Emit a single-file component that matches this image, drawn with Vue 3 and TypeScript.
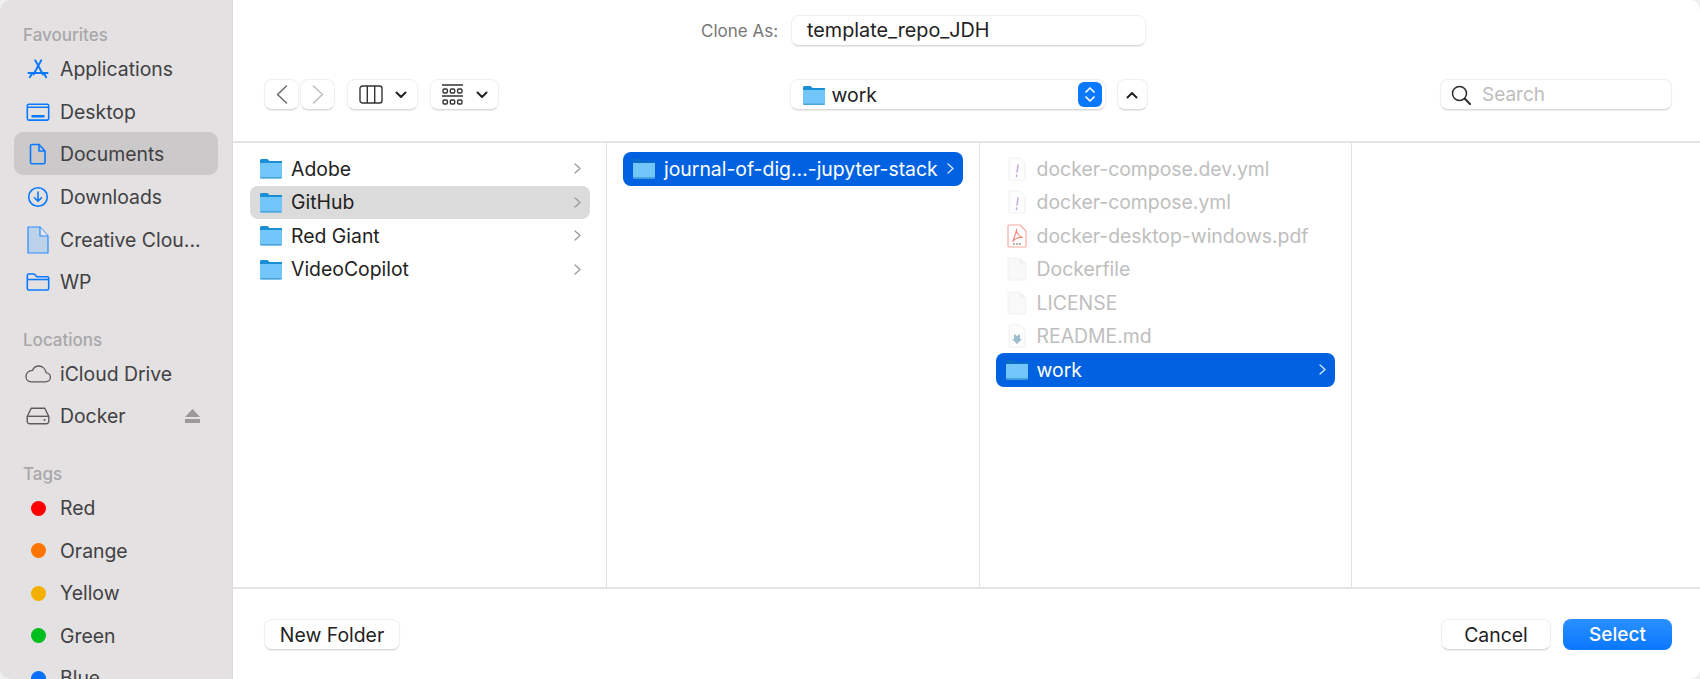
<script setup lang="ts">
interface SideItem {
  label: string
  icon: string
  active?: boolean
  eject?: boolean
}

interface FileRow {
  name: string
  icon: string
  state?: 'active' | 'selected' | 'dimmed'
  folder?: boolean
}

const favourites: SideItem[] = [
  { label: 'Applications', icon: 'apps' },
  { label: 'Desktop', icon: 'desktop' },
  { label: 'Documents', icon: 'doc', active: true },
  { label: 'Downloads', icon: 'downloads' },
  { label: 'Creative Clou...', icon: 'creative' },
  { label: 'WP', icon: 'wp' },
]

const locations: SideItem[] = [
  { label: 'iCloud Drive', icon: 'cloud' },
  { label: 'Docker', icon: 'disk', eject: true },
]

const tags = [
  { label: 'Red', color: '#fe0000' },
  { label: 'Orange', color: '#fd7400' },
  { label: 'Yellow', color: '#f3b000' },
  { label: 'Green', color: '#00bf1d' },
  { label: 'Blue', color: '#0a6ffb' },
]

const columns: FileRow[][] = [
  [
    { name: 'Adobe', icon: 'folder', folder: true },
    { name: 'GitHub', icon: 'folder', folder: true, state: 'active' },
    { name: 'Red Giant', icon: 'folder', folder: true },
    { name: 'VideoCopilot', icon: 'folder', folder: true },
  ],
  [{ name: 'journal-of-dig...-jupyter-stack', icon: 'folder', folder: true, state: 'selected' }],
  [
    { name: 'docker-compose.dev.yml', icon: 'yml', state: 'dimmed' },
    { name: 'docker-compose.yml', icon: 'yml', state: 'dimmed' },
    { name: 'docker-desktop-windows.pdf', icon: 'pdf', state: 'dimmed' },
    { name: 'Dockerfile', icon: 'blank', state: 'dimmed' },
    { name: 'LICENSE', icon: 'blank', state: 'dimmed' },
    { name: 'README.md', icon: 'readme', state: 'dimmed' },
    { name: 'work', icon: 'folder', folder: true, state: 'selected' },
  ],
  [],
]
</script>

<template>
  <div class="dialog">
    <aside class="sidebar">
      <div class="side-head first">Favourites</div>
      <div v-for="item in favourites" :key="item.label" class="side-row" :class="{ active: item.active }">
        <span class="side-icon">
          <svg v-if="item.icon === 'apps'" width="22" height="20" viewBox="0 0 24 22" fill="none" stroke="#0a78ff" stroke-width="2.2" stroke-linecap="round">
            <path d="M9 1.500l8.500 15.500M15.500 1.500L7 17M1.500 15.500h21M3 20l1.500-2.500M21 20l-1.500-2.500" />
          </svg>
          <svg v-else-if="item.icon === 'desktop'" width="24" height="20" viewBox="0 0 24 20" fill="none" stroke="#0a78ff" stroke-width="1.6">
            <rect x="1.300" y="2.300" width="21.400" height="15.800" rx="1.500" />
            <path d="M1.500 5.300h21" />
            <path d="M5.500 14.200h13" stroke-width="2.4" />
          </svg>
          <svg v-else-if="item.icon === 'doc'" width="18" height="22" viewBox="0 0 18 22" fill="none" stroke="#0a78ff" stroke-width="1.6" stroke-linejoin="round">
            <path d="M3 1.500h7l6 6.500v11.200a1.500 1.500 0 0 1-1.500 1.500H3a1.500 1.500 0 0 1-1.500-1.500V3A1.500 1.500 0 0 1 3 1.500z" />
            <path d="M10 1.500V8h6" />
          </svg>
          <svg v-else-if="item.icon === 'downloads'" width="22" height="22" viewBox="0 0 22 22" fill="none" stroke="#0a78ff" stroke-width="1.6" stroke-linecap="round" stroke-linejoin="round">
            <circle cx="11" cy="11" r="9.300" />
            <path d="M11 6v9M7.500 11.800L11 15.300l3.500-3.500" />
          </svg>
          <svg v-else-if="item.icon === 'creative'" width="22" height="28" viewBox="0 0 22 28" stroke-linejoin="round">
            <path d="M1 1h12l8 9v17H1z" fill="#bcd2ea" stroke="#2e8bfa" stroke-width="1.2" />
            <path d="M13 1v9h8" fill="#e6e6ea" stroke="#2e8bfa" stroke-width="1.2" />
          </svg>
          <svg v-else width="24" height="20" viewBox="0 0 24 20" fill="none" stroke="#0a78ff" stroke-width="1.6" stroke-linejoin="round">
            <path d="M1.300 5V3.500a1.500 1.500 0 0 1 1.500-1.500h5.500l2.500 2.700h10.400a1.500 1.500 0 0 1 1.500 1.500v10.300a1.500 1.500 0 0 1-1.500 1.500H2.800a1.500 1.500 0 0 1-1.500-1.500z" />
            <path d="M1.500 7.500h21" />
          </svg>
        </span>
        <span class="side-label">{{ item.label }}</span>
      </div>

      <div class="side-head">Locations</div>
      <div v-for="item in locations" :key="item.label" class="side-row">
        <span class="side-icon">
          <svg v-if="item.icon === 'cloud'" width="26" height="18" viewBox="0 0 26 18" fill="none" stroke="#5c5a5c" stroke-width="1.3" stroke-linejoin="round">
            <path d="M6 16.800h14.500c2.900 0 4.900-2 4.900-4.500 0-2.300-1.800-4.300-4.200-4.400C20.400 3.800 17.300 1 13.900 1c-3 0-5.400 1.800-6.400 4.400C3.700 5.400 1 8 1 11.500c0 3 2.200 5.300 5 5.300z" />
          </svg>
          <svg v-else width="24" height="18" viewBox="0 0 24 18" fill="none" stroke="#5c5a5c" stroke-width="1.4" stroke-linejoin="round">
            <path d="M5.200 1.300h13.600l4 8.200v4.800a2.500 2.500 0 0 1-2.500 2.500H3.700a2.500 2.500 0 0 1-2.500-2.500V9.500z" />
            <path d="M1.500 9.300h21" />
            <circle cx="18.500" cy="13" r="1" fill="#5c5a5c" stroke="none" />
          </svg>
        </span>
        <span class="side-label">{{ item.label }}</span>
        <svg v-if="item.eject" class="eject" width="15" height="14" viewBox="0 0 15 14" fill="#9b999b">
          <path d="M7.500 0L15 8H0z" />
          <rect x="0" y="10" width="15" height="4" />
        </svg>
      </div>

      <div class="side-head">Tags</div>
      <div v-for="tag in tags" :key="tag.label" class="side-row">
        <span class="side-icon">
          <span class="dot" :style="{ background: tag.color }"></span>
        </span>
        <span class="side-label">{{ tag.label }}</span>
      </div>
    </aside>

    <main class="main">
      <header class="top">
        <div class="clone-row">
          <label class="clone-label">Clone As:</label>
          <div class="clone-input">template_repo_JDH</div>
        </div>
        <div class="toolbar">
          <div class="tool-group left">
            <div class="nav-pair">
              <button class="btn nav-btn">
                <svg width="12" height="19" viewBox="0 0 12 19" fill="none" stroke="#6b6b6b" stroke-width="1.5" stroke-linecap="round" stroke-linejoin="round"><path d="M10.500 1L1.500 9.500l9 8.500" /></svg>
              </button>
              <button class="btn nav-btn">
                <svg width="12" height="19" viewBox="0 0 12 19" fill="none" stroke="#bdbdbd" stroke-width="1.5" stroke-linecap="round" stroke-linejoin="round"><path d="M1.500 1l9 8.500-9 8.500" /></svg>
              </button>
            </div>
            <button class="btn view-btn">
              <svg width="24" height="19" viewBox="0 0 24 19" fill="none" stroke="#333" stroke-width="1.4"><rect x="1" y="1" width="22" height="17" rx="2.500" /><path d="M8.300 1v17M15.700 1v17" /></svg>
              <svg class="caret" width="12" height="8" viewBox="0 0 12 8" fill="none" stroke="#222" stroke-width="2" stroke-linecap="round" stroke-linejoin="round"><path d="M1.500 1.500L6 6l4.500-4.500" /></svg>
            </button>
            <button class="btn group-btn">
              <svg width="22" height="22" viewBox="0 0 22 22" fill="none" stroke="#333" stroke-width="1.4">
                <path d="M0 1h21M0 12h21" />
                <rect x="1" y="5" width="4.400" height="4" rx="1.200" /><rect x="8.300" y="5" width="4.400" height="4" rx="1.200" /><rect x="15.600" y="5" width="4.400" height="4" rx="1.200" />
                <rect x="1" y="16" width="4.400" height="4" rx="1.200" /><rect x="8.300" y="16" width="4.400" height="4" rx="1.200" /><rect x="15.600" y="16" width="4.400" height="4" rx="1.200" />
              </svg>
              <svg class="caret" width="12" height="8" viewBox="0 0 12 8" fill="none" stroke="#222" stroke-width="2" stroke-linecap="round" stroke-linejoin="round"><path d="M1.500 1.500L6 6l4.500-4.500" /></svg>
            </button>
          </div>

          <div class="tool-group center">
            <div class="btn path-select">
              <svg width="22" height="20" viewBox="0 0 22 20">
                <path d="M0 2.500A1.500 1.500 0 0 1 1.500 1h6l2 2H22v4H0z" fill="#1a8fd6" />
                <path d="M0 5h22v13.500a1.500 1.500 0 0 1-1.500 1.500h-19A1.500 1.500 0 0 1 0 18.500z" fill="#72c6f9" />
                <path d="M0 18.500h22a1.500 1.500 0 0 1-1.500 1.500h-19A1.500 1.500 0 0 1 0 18.500z" fill="#4ba3dc" />
              </svg>
              <span class="path-name">work</span>
              <span class="stepper">
                <svg width="12" height="17" viewBox="0 0 12 17" fill="none" stroke="#fff" stroke-width="1.7" stroke-linecap="round" stroke-linejoin="round"><path d="M2 6l4-4 4 4M2 11l4 4 4-4" /></svg>
              </span>
            </div>
            <button class="btn up-btn">
              <svg width="12" height="8" viewBox="0 0 12 8" fill="none" stroke="#222" stroke-width="2" stroke-linecap="round" stroke-linejoin="round"><path d="M1.500 6.500L6 2l4.500 4.500" /></svg>
            </button>
          </div>

          <div class="btn search">
            <svg width="20" height="20" viewBox="0 0 20 20" fill="none" stroke="#2a2a2a" stroke-width="1.5" stroke-linecap="round"><circle cx="8.500" cy="8.500" r="7" /><path d="M13.800 13.800L19 19" stroke-width="2" /></svg>
            <span class="search-text">Search</span>
          </div>
        </div>
      </header>

      <section class="browser">
        <div v-for="(col, i) in columns" :key="i" class="column">
          <div v-for="row in col" :key="row.name" class="row" :class="row.state">
            <span class="row-icon">
              <svg v-if="row.icon === 'folder'" width="22" height="21" viewBox="0 0 22 21">
                <path d="M0 2.500A1.500 1.500 0 0 1 1.500 1h6l2 2H22v5H0z" :fill="row.state === 'selected' ? '#0a6cc4' : '#1a8fd6'" />
                <path d="M0 5h22v14a1.500 1.500 0 0 1-1.500 1.500h-19A1.500 1.500 0 0 1 0 19z" fill="#72c6f9" />
                <path d="M0 19h22a1.500 1.500 0 0 1-1.500 1.500h-19A1.500 1.500 0 0 1 0 19z" fill="#4ba3dc" />
              </svg>
              <svg v-else-if="row.icon === 'yml'" width="18" height="24" viewBox="0 0 18 24" stroke-linejoin="round">
                <path d="M1 1h11l5 5v17H1z" fill="#fdfdfd" stroke="#f0f0f0" />
                <path d="M10 8l-1 7M8.600 18v1.400" stroke="#c9a6e4" stroke-width="1.5" stroke-linecap="round" fill="none" />
              </svg>
              <svg v-else-if="row.icon === 'pdf'" width="20" height="24" viewBox="0 0 20 24" stroke-linejoin="round">
                <path d="M2 1h11l6 6v15a1 1 0 0 1-1 1H2a1 1 0 0 1-1-1V2a1 1 0 0 1 1-1z" fill="#fff" stroke="#f5a79f" stroke-width="1.1" />
                <path d="M9.500 5c-.6 3 2.500 7.500 6 8.500-3.500-.5-8 1-9.500 4 .2-2.500 3.500-8 3.500-12.500z" fill="none" stroke="#ef8a7e" stroke-width="1.2" />
                <path d="M6 20h8" stroke="#999" stroke-width="1.5" stroke-dasharray="2 1" />
              </svg>
              <svg v-else-if="row.icon === 'blank'" width="20" height="24" viewBox="0 0 20 24" stroke-linejoin="round">
                <path d="M1 1h12l6 6v16H1z" fill="#f9f9f9" stroke="#f1f1f1" />
                <path d="M13 1v6h6" fill="#f1f1f1" stroke="#f1f1f1" />
              </svg>
              <svg v-else-if="row.icon === 'readme'" width="18" height="24" viewBox="0 0 18 24" stroke-linejoin="round">
                <path d="M1 1h11l5 5v17H1z" fill="#fdfdfd" stroke="#f0f0f0" />
                <path d="M6 10l3 2 3-2v5l2 0-5 5-5-5 2 0z" fill="#9dbdcc" />
              </svg>
            </span>
            <span class="row-name">{{ row.name }}</span>
            <svg v-if="row.folder" class="chevron" width="7" height="11" viewBox="0 0 7 11" fill="none" stroke="currentColor" stroke-width="1.3" stroke-linecap="round" stroke-linejoin="round"><path d="M1 1l5 4.500L1 10" /></svg>
          </div>
        </div>
      </section>

      <footer class="footer">
        <button class="btn foot-btn new-folder">New Folder</button>
        <div class="foot-right">
          <button class="btn foot-btn cancel">Cancel</button>
          <button class="foot-btn select">Select</button>
        </div>
      </footer>
    </main>
  </div>
</template>

<style>
html,
body {
  margin: 0;
  background: #efefef;
  overflow: hidden;
}
</style>

<style scoped>
.dialog {
  display: flex;
  width: 1700px;
  height: 679px;
  overflow: hidden;
  background: #fff;
  font-family: Inter, "Liberation Sans", sans-serif;
  color: #222;
  border-radius: 10px;
}

.sidebar {
  width: 233px;
  flex: none;
  box-sizing: border-box;
  padding: 0 14px;
  background: #e3e1e2;
  border-right: 1px solid #dcdadb;
}

.side-head {
  height: 22px;
  margin: 26px 9px 1px;
  font-size: 17px;
  font-weight: 500;
  line-height: 22px;
  color: #a9a7a9;
}

.side-head.first {
  margin-top: 24px;
}

.side-row {
  display: flex;
  align-items: center;
  box-sizing: border-box;
  height: 42.6px;
  padding-top: 2px;
  border-radius: 9px;
  font-size: 19.4px;
  color: #414042;
}

.side-row.active {
  background: #cbc9ca;
}

.side-icon {
  display: flex;
  align-items: center;
  justify-content: center;
  width: 32px;
  margin-left: 8px;
  margin-right: 6px;
}

.side-label {
  flex: 1;
  white-space: nowrap;
}

.eject {
  margin-right: 18px;
}

.dot {
  width: 15px;
  height: 15px;
  border-radius: 50%;
}

.main {
  flex: 1;
  display: flex;
  flex-direction: column;
  min-width: 0;
}

.top {
  height: 143px;
  flex: none;
  box-sizing: border-box;
  padding-top: 15px;
  border-bottom: 2px solid #e4e4e4;
}

.clone-row {
  display: flex;
  align-items: center;
  height: 31px;
  padding-left: 468px;
}

.clone-label {
  width: 90px;
  font-size: 17px;
  color: #777;
}

.clone-input {
  box-sizing: border-box;
  width: 355px;
  height: 31px;
  padding-left: 15px;
  border: 1px solid #f0f0f0;
  border-bottom-color: #d8d8d8;
  border-radius: 8px;
  box-shadow: 0 1px 1px rgba(0, 0, 0, 0.08);
  font-size: 19.8px;
  line-height: 28px;
}

.toolbar {
  display: flex;
  justify-content: space-between;
  margin-top: 33px;
  padding: 0 28px 0 31px;
}

.tool-group {
  display: flex;
  gap: 11px;
}

.tool-group.left {
  gap: 12px;
}

.tool-group.center {
  margin-right: 2px;
}

.btn {
  display: flex;
  align-items: center;
  box-sizing: border-box;
  height: 31px;
  padding: 0;
  background: #fff;
  border: 1px solid #f0f0f0;
  border-bottom-color: #dadada;
  border-radius: 8px;
  box-shadow: 0 1px 1px rgba(0, 0, 0, 0.08);
  font-family: inherit;
  color: #222;
}

.nav-pair {
  display: flex;
  gap: 1px;
}

.nav-btn {
  justify-content: center;
  width: 35px;
}

.view-btn {
  justify-content: center;
  width: 71px;
  gap: 12px;
}

.group-btn {
  justify-content: center;
  width: 69px;
  gap: 12px;
}

.path-select {
  width: 316px;
  padding-left: 12px;
}

.path-name {
  flex: 1;
  margin-left: 7px;
  font-size: 19.4px;
}

.stepper {
  display: flex;
  align-items: center;
  justify-content: center;
  width: 24px;
  height: 25px;
  margin-right: 3px;
  border-radius: 6px;
  background: #0a78ff;
}

.up-btn {
  justify-content: center;
  width: 31px;
}

.search {
  width: 232px;
  padding-left: 10px;
}

.search-text {
  margin-left: 11px;
  font-size: 19px;
  color: #bdbdbd;
}

.browser {
  flex: 1;
  display: flex;
  min-height: 0;
  border-bottom: 2px solid #e4e4e4;
}

.column {
  width: 372.6px;
  flex: none;
  box-sizing: border-box;
  padding: 9px 16px 0;
  border-right: 1px solid #e2e2e2;
}

.column:first-child {
  width: 374px;
  padding: 9px 16px 0 17px;
}

.column:last-child {
  flex: 1;
  border-right: none;
}

.row {
  display: flex;
  align-items: center;
  height: 33.5px;
  padding-left: 10px;
  border-radius: 8px;
  font-size: 19.4px;
  color: #222;
}

.row-icon {
  display: flex;
  align-items: center;
  justify-content: center;
  width: 22px;
  margin-right: 9px;
}

.row-name {
  flex: 1;
  white-space: nowrap;
}

.chevron {
  margin-right: 9px;
  color: #9a9a9a;
}

.row.active {
  background: #dbdbdb;
}

.row.selected {
  background: #0062e1;
  color: #fff;
}

.row.selected .chevron {
  color: #d8e8ff;
}

.row.dimmed {
  color: #bebebe;
}

.footer {
  display: flex;
  justify-content: space-between;
  height: 90px;
  flex: none;
  box-sizing: border-box;
  padding: 30px 28px 0 31px;
}

.foot-right {
  display: flex;
  gap: 12px;
}

.foot-btn {
  justify-content: center;
  height: 31px;
  font-size: 19.4px;
}

.new-folder {
  width: 136px;
}

.cancel {
  width: 110px;
}

.select {
  width: 109px;
  border: none;
  border-radius: 8px;
  background: linear-gradient(#2a90ff, #0a78ff);
  color: #fff;
  font-family: inherit;
  font-size: 19px;
  font-weight: 500;
}
</style>
